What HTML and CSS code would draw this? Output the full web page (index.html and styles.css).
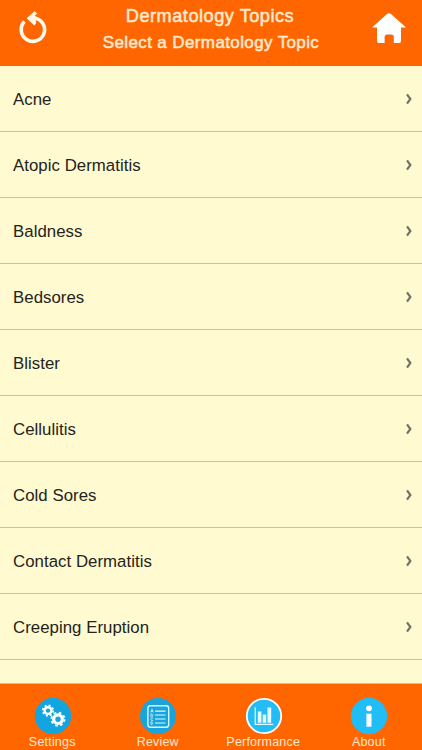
FILE: index.html
```html
<!DOCTYPE html>
<html lang="en">
<head>
<meta charset="utf-8">
<title>Dermatology Topics</title>
<link rel="stylesheet" href="styles.css">
</head>
<body>
<div class="app">
  <header class="header">
    <svg class="header-icon" viewBox="0 0 66 66" aria-label="Reload">
      <path d="M24.4 21.6A11.7 11.7 0 1 0 35.4 18.2" fill="none" stroke="#fff9ee" stroke-width="3.6"/>
      <path d="M26.6 18.2L34.6 11.2L37.2 13.6L34.8 15.8L38.2 18.2L35.6 20.4L36.2 23L34.4 25.4Z" fill="#fff9ee"/>
    </svg>
    <div class="titles">
      <h1 class="title">Dermatology Topics</h1>
      <h2 class="subtitle">Select a Dermatology Topic</h2>
    </div>
    <svg class="header-icon" viewBox="0 0 66 66" aria-label="Home">
      <path d="M16 27.4L31 14Q33 12.3 35 14L50 27.4H45V41Q45 43 43 43H37.8V37.2Q37.8 34.6 35.4 34.6H31Q28.6 34.6 28.6 37.2V43H23Q21 43 21 41V27.4Z" fill="#fff"/>
    </svg>
  </header>
  <ul class="topics">
    <li class="topic"><span>Acne</span><svg class="chevron" viewBox="0 0 8 12"><path d="M2 1.3L5.4 6L2 10.7"/></svg></li>
    <li class="topic"><span>Atopic Dermatitis</span><svg class="chevron" viewBox="0 0 8 12"><path d="M2 1.3L5.4 6L2 10.7"/></svg></li>
    <li class="topic"><span>Baldness</span><svg class="chevron" viewBox="0 0 8 12"><path d="M2 1.3L5.4 6L2 10.7"/></svg></li>
    <li class="topic"><span>Bedsores</span><svg class="chevron" viewBox="0 0 8 12"><path d="M2 1.3L5.4 6L2 10.7"/></svg></li>
    <li class="topic"><span>Blister</span><svg class="chevron" viewBox="0 0 8 12"><path d="M2 1.3L5.4 6L2 10.7"/></svg></li>
    <li class="topic"><span>Cellulitis</span><svg class="chevron" viewBox="0 0 8 12"><path d="M2 1.3L5.4 6L2 10.7"/></svg></li>
    <li class="topic"><span>Cold Sores</span><svg class="chevron" viewBox="0 0 8 12"><path d="M2 1.3L5.4 6L2 10.7"/></svg></li>
    <li class="topic"><span>Contact Dermatitis</span><svg class="chevron" viewBox="0 0 8 12"><path d="M2 1.3L5.4 6L2 10.7"/></svg></li>
    <li class="topic"><span>Creeping Eruption</span><svg class="chevron" viewBox="0 0 8 12"><path d="M2 1.3L5.4 6L2 10.7"/></svg></li>
  </ul>
  <nav class="tabs">
    <div class="tab">
      <svg class="tab-icon" viewBox="0 0 38 38">
        <circle cx="19" cy="19" r="18.2" fill="#12a5df"/>
        <g fill="none" stroke="#fff">
          <circle cx="14" cy="13.6" r="3.4" stroke-width="2.4"/>
          <circle cx="14" cy="13.6" r="5.2" stroke-width="1.7" stroke-dasharray="2.05 2.034"/>
          <circle cx="24" cy="22.2" r="4.3" stroke-width="3.2"/>
          <circle cx="24" cy="22.2" r="6.5" stroke-width="1.9" stroke-dasharray="2.55 2.555"/>
        </g>
      </svg>
      <span class="tab-label">Settings</span>
    </div>
    <div class="tab">
      <svg class="tab-icon" viewBox="0 0 38 38">
        <circle cx="19" cy="19" r="18" fill="#1aa4dc"/>
        <rect x="8.9" y="8.8" width="20.8" height="21.4" rx="2.4" fill="none" stroke="#d8faff" stroke-width="1.4"/>
        <path d="M16 14.2H26.5M16 18H26.5M16 22H26.5M16 26H26.5" stroke="#d8faff" stroke-width="1.2"/>
        <path d="M11.6 15.4L13 12.2L14.4 15.4M12.2 14.5H13.8M11.9 16.9H13.2Q14.3 17.7 13.2 18.3Q14.6 19 13.2 19.8H11.9ZM14.2 21.2Q11.8 20.6 11.8 22.3Q11.8 24 14.2 23.4M12 24.9H13Q14.4 26.2 13 27.6H12Z" fill="none" stroke="#d8faff" stroke-width=".75"/>
      </svg>
      <span class="tab-label">Review</span>
    </div>
    <div class="tab">
      <svg class="tab-icon" viewBox="0 0 38 38">
        <circle cx="19" cy="19" r="17.2" fill="#23bcf4" stroke="#fff" stroke-width="1.8"/>
        <path d="M10.2 10.2V27.3H28.2" fill="none" stroke="#e5fbff" stroke-width="1.2"/>
        <path d="M12.8 14.4H16.4V25.8H12.8ZM17.7 17.5H21.2V25.8H17.7ZM22.5 10.6H26.2V25.8H22.5Z" fill="#e5fbff"/>
      </svg>
      <span class="tab-label">Performance</span>
    </div>
    <div class="tab">
      <svg class="tab-icon" viewBox="0 0 38 38">
        <circle cx="19" cy="19" r="18.2" fill="#20bdf6"/>
        <circle cx="19" cy="11.3" r="2.9" fill="#fff"/>
        <path d="M16.4 16.7H21.5V29.7H16.4Z" fill="#fff"/>
      </svg>
      <span class="tab-label">About</span>
    </div>
  </nav>
</div>
</body>
</html>
```
FILE: styles.css
```css
* { box-sizing: border-box; margin: 0; padding: 0; }

body {
  font-family: "Liberation Sans", Arial, sans-serif;
  background: #fffad0;
}

.app {
  display: flex;
  flex-direction: column;
  height: 750px;
  width: 422px;
  overflow: hidden;
}

.header {
  display: flex;
  justify-content: space-between;
  flex: 0 0 66px;
  background: #ff6600;
}

.header-icon { width: 66px; height: 66px; }

.titles {
  text-align: center;
  color: #ffead0;
  white-space: nowrap;
  padding-top: 3px;
}

.title, .subtitle {
  font-weight: 400;
  line-height: 27px;
  -webkit-text-stroke: 0.5px #ffead0;
}

.title { font-size: 18.2px; letter-spacing: 0.5px; margin-left: -2px; }
.subtitle { font-size: 17px; letter-spacing: 0.38px; line-height: 26px; }

.topics {
  list-style: none;
  flex: 1;
  background: #fffad0;
  overflow: hidden;
}

.topic {
  display: flex;
  align-items: center;
  justify-content: space-between;
  height: 66px;
  padding: 0 9px 0 13px;
  border-bottom: 1px solid #c3c0b4;
  font-size: 16.8px;
  letter-spacing: 0.05px;
  color: #232320;
}

.topic span { padding-top: 2px; }

.chevron { width: 8px; height: 12px; }

.chevron path {
  fill: none;
  stroke: #74716a;
  stroke-width: 2.2;
}

.tabs {
  display: flex;
  flex: 0 0 67px;
  min-height: 0;
  border-top: 1px solid #e9b98c;
  background: #ff6600;
}

.tab {
  flex: 1 1 0;
  display: flex;
  flex-direction: column;
  align-items: center;
  padding-top: 13px;
}

.tab-icon { width: 38px; height: 38px; flex: none; }

.tab-label {
  font-size: 12.5px;
  line-height: 15px;
  letter-spacing: 0.2px;
  padding-right: 1px;
  color: #ffe6d0;
}
```
